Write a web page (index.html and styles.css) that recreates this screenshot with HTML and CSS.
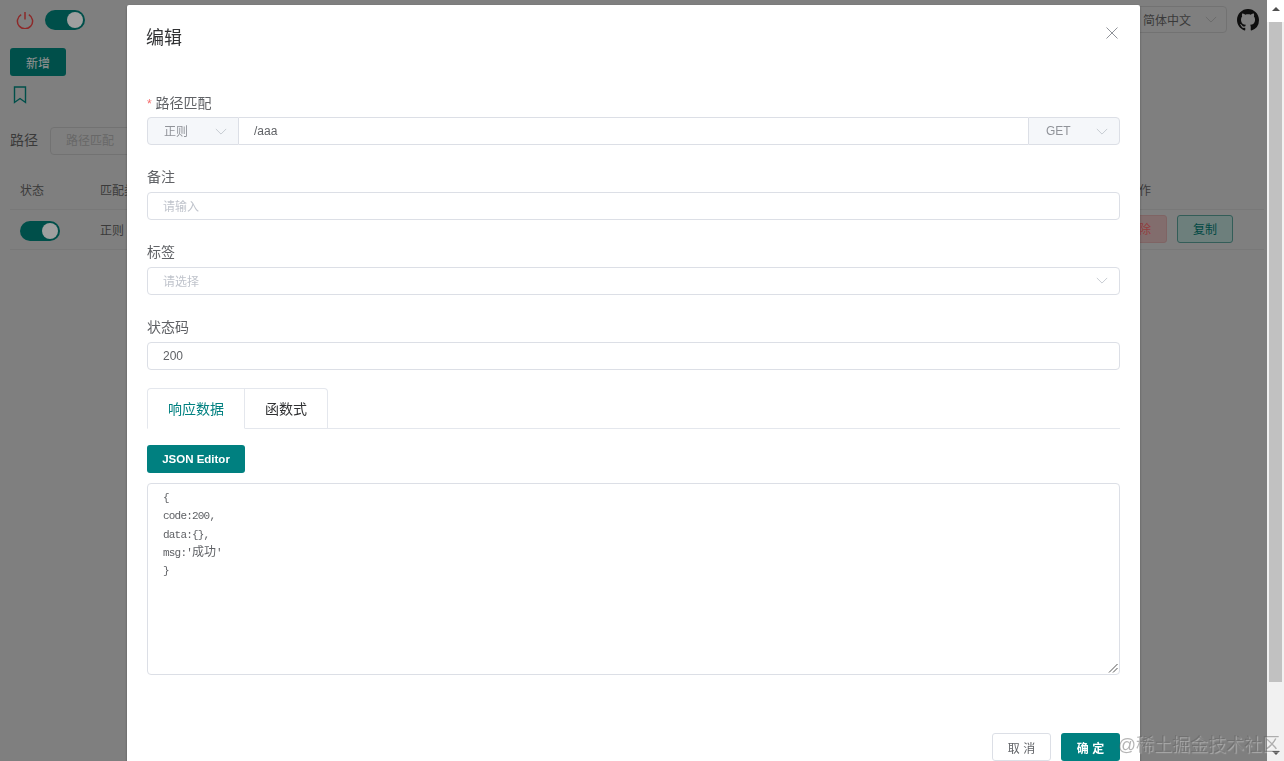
FILE: index.html
```html
<!DOCTYPE html>
<html lang="zh">
<head>
<meta charset="utf-8">
<title>编辑</title>
<link rel="stylesheet" href="styles.css">
</head>
<body>
<div class="page">
  <header class="topbar">
    <div class="topbar-left">
      <svg class="power" viewBox="0 0 18 18" width="18" height="18"><path d="M5.2 3.6a7.6 7.6 0 1 0 7.6 0" fill="none" stroke="currentColor" stroke-width="1.5"/><path d="M9 1v7.5" fill="none" stroke="currentColor" stroke-width="1.5"/></svg>
      <span class="switch"><span class="knob"></span></span>
    </div>
    <div class="topbar-right">
      <div class="lang"><span>简体中文</span><svg class="chev" viewBox="0 0 14 8" width="12" height="7"><path d="M1 1l6 6 6-6" fill="none" stroke="currentColor"/></svg></div>
      <svg class="github" viewBox="0 0 16 16" width="22" height="22"><path fill="currentColor" d="M8 0C3.58 0 0 3.58 0 8c0 3.54 2.29 6.53 5.47 7.59.4.07.55-.17.55-.38 0-.19-.01-.82-.01-1.49-2.01.37-2.53-.49-2.69-.94-.09-.23-.48-.94-.82-1.13-.28-.15-.68-.52-.01-.53.63-.01 1.08.58 1.23.82.72 1.21 1.87.87 2.33.66.07-.52.28-.87.51-1.07-1.78-.2-3.64-.89-3.64-3.95 0-.87.31-1.59.82-2.15-.08-.2-.36-1.02.08-2.12 0 0 .67-.21 2.2.82.64-.18 1.32-.27 2-.27.68 0 1.36.09 2 .27 1.53-1.04 2.2-.82 2.2-.82.44 1.1.16 1.92.08 2.12.51.56.82 1.27.82 2.15 0 3.07-1.87 3.75-3.65 3.95.29.25.54.73.54 1.48 0 1.07-.01 1.93-.01 2.2 0 .21.15.46.55.38A8.013 8.013 0 0016 8c0-4.42-3.58-8-8-8z"/></svg>
    </div>
  </header>
  <div class="actions"><button class="btn-add">新增</button></div>
  <svg class="bookmark" viewBox="0 0 14 18" width="14" height="18"><path d="M1.5 1h11v15.5L7 12.5l-5.500 4z" fill="none" stroke="currentColor" stroke-width="1.400"/></svg>
  <div class="filter"><label class="filter-label">路径</label><div class="filter-input">路径匹配</div></div>
  <div class="table">
    <div class="row head"><span class="c-status">状态</span><span class="c-type">匹配类型</span><span class="c-rest"></span><span class="c-op head-op">操作</span></div>
    <div class="row">
      <span class="c-status"><span class="switch row-switch"><span class="knob"></span></span></span>
      <span class="c-type">正则</span><span class="c-rest"></span>
      <span class="c-op row-op"><button class="mini danger">删除</button><button class="mini copy">复制</button></span>
    </div>
  </div>
</div>

<div class="scrollbar">
  <div class="arrow"><span class="tri up"></span></div>
  <div class="thumb"></div>
  <div class="arrow end"><span class="tri down"></span></div>
</div>

<div class="overlay">
  <section class="modal">
    <div class="modal-head">
      <h2 class="modal-title">编辑</h2>
      <svg class="close" viewBox="0 0 12 12" width="12" height="12"><path d="M.5.5l11 11M11.500.5l-11 11" fill="none" stroke="currentColor"/></svg>
    </div>
    <form class="form">
      <div class="item">
        <label class="label required"><i class="req">*</i> 路径匹配</label>
        <div class="group">
          <div class="addon a-left"><span class="cjk-text">正则</span><svg class="chev" viewBox="0 0 14 8" width="12" height="7"><path d="M1 1l6 6 6-6" fill="none" stroke="currentColor"/></svg></div>
          <div class="group-input">/aaa</div>
          <div class="addon a-right"><span>GET</span><svg class="chev" viewBox="0 0 14 8" width="12" height="7"><path d="M1 1l6 6 6-6" fill="none" stroke="currentColor"/></svg></div>
        </div>
      </div>
      <div class="item">
        <label class="label">备注</label>
        <div class="input placeholder">请输入</div>
      </div>
      <div class="item">
        <label class="label">标签</label>
        <div class="input placeholder select"><span>请选择</span><svg class="chev" viewBox="0 0 14 8" width="12" height="7"><path d="M1 1l6 6 6-6" fill="none" stroke="currentColor"/></svg></div>
      </div>
      <div class="item last">
        <label class="label">状态码</label>
        <div class="input">200</div>
      </div>
      <div class="tabs">
        <div class="tab active">响应数据</div>
        <div class="tab">函数式</div>
      </div>
      <button type="button" class="btn-json">JSON Editor</button>
      <div class="code">
        <div class="code-line">{</div>
        <div class="code-line">code:200,</div>
        <div class="code-line">data:{},</div>
        <div class="code-line">msg:'<span class="code-cjk">成功</span>'</div>
        <div class="code-line">}</div>
        <svg class="grip" viewBox="0 0 10 10" width="10" height="10"><path d="M9.500 1L1 9.500M9.500 5L5 9.500" fill="none" stroke="#555"/></svg>
      </div>
    </form>
    <div class="modal-foot">
      <button class="btn-cancel">取 消</button>
      <button class="btn-ok">确 定</button>
    </div>
  </section>
</div>

<div class="watermark">@稀土掘金技术社区</div>
</body>
</html>
```
FILE: styles.css
```css
* { box-sizing: border-box; }
html, body { margin: 0; height: 100%; overflow: hidden; }
body {
  display: flex;
  font-family: "Liberation Sans", "Noto Sans CJK SC", sans-serif;
  font-size: 14px;
  color: #606266;
  background: #fff;
}
button { font-family: inherit; cursor: pointer; }

/* background page: colours are the ones that read correctly under the .35 overlay */
.page { flex: 1; min-width: 0; height: 761px; overflow: hidden; background: #c4c4c4; color: #5a5a5a; }
.topbar {
  display: flex;
  justify-content: space-between;
  align-items: center;
  height: 40px;
  padding: 0 25px 1px 16px;
}
.topbar-left { display: flex; align-items: center; gap: 11px; }
.topbar-right { display: flex; align-items: center; gap: 10px; margin-right: -17px; }
.power { color: #d94040; }
.switch {
  display: inline-flex;
  justify-content: flex-end;
  align-items: center;
  width: 40px;
  height: 20px;
  padding: 2px;
  border-radius: 10px;
  background: #007a72;
}
.row-switch { margin-top: 2px; }
.knob { width: 16px; height: 16px; border-radius: 50%; background: #f4f4f4; }
.lang {
  display: flex;
  align-items: center;
  justify-content: space-between;
  width: 120px;
  height: 27px;
  padding: 0 9px 0 35px;
  border: 1px solid #b0b0b0;
  border-radius: 4px;
  font-size: 12px;
}
.chev { color: #c0c4cc; flex: none; }
.lang .chev { color: #a0a0a0; }
.github { color: #161616; }
.actions { padding: 8px 0 0 10px; }
.btn-add {
  width: 56px;
  height: 28px;
  border: 0;
  border-radius: 3px;
  background: #007a72;
  color: #e0e0e0;
  font-size: 12px;
}
.bookmark { display: block; margin: 10px 0 0 13px; color: #007a72; }
.filter { display: flex; align-items: center; gap: 12px; margin-top: 23px; padding-left: 10px; }
.filter-label { font-size: 14px; margin-bottom: 4px; }
.filter-input {
  width: 200px;
  height: 28px;
  padding-left: 15px;
  border: 1px solid #b0b0b0;
  border-radius: 4px;
  color: #a0a0a0;
  font-size: 12px;
  line-height: 26px;
}
.table { margin: 15px 3px 0 10px; font-size: 12px; }
.row {
  display: flex;
  align-items: center;
  height: 40px;
  padding-left: 10px;
  border-bottom: 1px solid #b8b8b8;
}
.c-status { width: 80px; display: flex; }
.c-type { width: 100px; }
.c-rest { flex: 1; }
.c-op { width: 153px; display: flex; gap: 10px; }
.head-op { padding-left: 16px; }
.row-op { margin-bottom: 2px; }
.mini {
  width: 56px;
  height: 28px;
  border-radius: 3px;
  font-size: 12px;
  padding: 0;
}
.danger { background: #c8a8a8; border: 1px solid #c49a9a; color: #e06060; }
.copy { background: #a8c4bf; border: 1px solid #4f8f88; color: #007068; }

/* scrollbar */
.scrollbar {
  display: flex;
  flex-direction: column;
  flex: none;
  width: 17px;
  height: 761px;
  background: #f1f1f1;
}
.arrow { height: 22px; display: flex; align-items: center; justify-content: center; background: #fff; }
.arrow.end { height: 17px; margin-top: auto; background: #f1f1f1; }
.thumb { height: 660px; margin: 0 2px 0 2px; background: #c1c1c1; }
.tri { width: 0; height: 0; border-left: 4px solid transparent; border-right: 4px solid transparent; }
.tri.up { border-bottom: 4px solid #505050; margin-bottom: 4px; }
.tri.down { border-top: 4px solid #505050; }

/* modal */
.overlay {
  position: fixed;
  left: 0;
  top: 0;
  right: 17px;
  bottom: 0;
  overflow: hidden;
  background: rgba(0, 0, 0, .35);
}
.modal {
  width: 1013px;
  margin: 5px auto 50px;
  border-radius: 2px;
  background: #fff;
  box-shadow: 0 1px 3px rgba(0, 0, 0, .3);
}
.modal-head {
  display: flex;
  justify-content: space-between;
  padding: 21px 22px 0 20px;
  height: 84px;
}
.modal-title { margin: 0 0 0 -1px; font-size: 18px; font-weight: 400; line-height: 24px; color: #303133; }
.close { margin-top: 1px; color: #909399; }
.form { padding: 0 20px; }
.item { margin-bottom: 19px; }
.item.last { margin-bottom: 18px; }
.label { display: block; height: 28px; font-size: 14px; line-height: 26px; }
.label.required { line-height: 28px; }
.req { color: #f56c6c; font-style: normal; font-size: 12px; }
.group { display: flex; height: 28px; font-size: 12px; }
.addon {
  display: flex;
  align-items: center;
  justify-content: space-between;
  background: #f5f7fa;
  border: 1px solid #dcdfe6;
  color: #909399;
  padding: 0 11px 0 16px;
}
.a-left { width: 92px; border-radius: 4px 0 0 4px; border-right: 1px solid #dcdfe6; }
.a-right { width: 92px; border-radius: 0 4px 4px 0; padding-left: 17px; }
.cjk-text { padding-bottom: 2px; }
.group-input {
  flex: 1;
  padding-left: 15px;
  border: solid #dcdfe6;
  border-width: 1px 0;
  line-height: 26px;
}
.input {
  display: flex;
  align-items: center;
  justify-content: space-between;
  height: 28px;
  padding: 0 11px 0 15px;
  border: 1px solid #dcdfe6;
  border-radius: 4px;
  font-size: 12px;
}
.placeholder { color: #c0c4cc; padding-bottom: 2px; }
.tabs { display: flex; height: 41px; border-bottom: 1px solid #e4e7ed; }
.tab {
  width: 83px;
  height: 41px;
  border: 1px solid #e4e7ed;
  border-left: 0;
  border-bottom: 1px solid #e4e7ed;
  text-align: center;
  line-height: 40px;
  color: #303133;
}
.tab.active {
  width: 98px;
  border-left: 1px solid #e4e7ed;
  border-bottom-color: #fff;
  border-radius: 4px 0 0 0;
  color: #008080;
}
.tab:last-child { border-radius: 0 4px 0 0; }
.btn-json {
  display: block;
  width: 98px;
  height: 28px;
  margin: 16px 0 10px;
  padding: 0;
  border: 0;
  border-radius: 3px;
  background: #008080;
  color: #fff;
  font-size: 11.500px;
  font-weight: 700;
}
.code {
  position: relative;
  height: 192px;
  padding: 5px 15px;
  border: 1px solid #dcdfe6;
  border-radius: 4px;
  font-family: "Liberation Mono", "Noto Sans CJK SC", monospace;
  font-size: 11px;
  letter-spacing: -.8px;
}
.code-line { height: 18.300px; line-height: 18.300px; }
.code-cjk { font-size: 12px; letter-spacing: 0; }
.grip { position: absolute; right: 1px; bottom: 1px; }
.modal-foot {
  display: flex;
  justify-content: flex-end;
  gap: 10px;
  padding: 58px 20px 20px;
}
.btn-cancel, .btn-ok {
  height: 28px;
  padding: 0;
  border-radius: 3px;
  font-size: 12px;
}
.btn-cancel { width: 59px; background: #fff; border: 1px solid #dcdfe6; color: #606266; }
.btn-ok { width: 59px; background: #008080; border: 0; color: #fff; font-weight: 700; }

/* screenshot watermark */
.watermark {
  position: fixed;
  right: 4px;
  top: 734px;
  font-size: 18px;
  line-height: 22px;
  color: rgba(90, 90, 90, .45);
  text-shadow: 1px 1px 1px rgba(255, 255, 255, .35);
  white-space: nowrap;
}
```
